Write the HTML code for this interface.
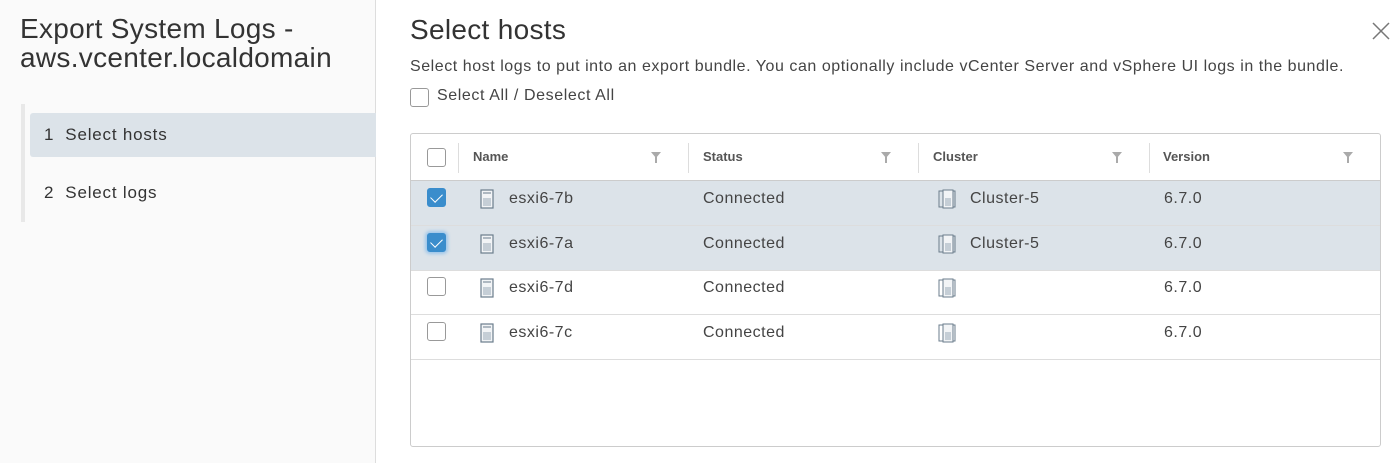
<!DOCTYPE html>
<html><head><style>
*{box-sizing:border-box;margin:0;padding:0}
body{width:1400px;height:463px;overflow:hidden;background:#fff;font-family:"Liberation Sans",sans-serif;color:#333;position:relative}
.side{position:absolute;left:0;top:0;width:376px;height:463px;background:#fafafa;border-right:1px solid #ddd}
.side h1{position:absolute;left:20px;top:14px;font-weight:normal;font-size:28px;line-height:29px;color:#333;letter-spacing:0.3px}
.bar{position:absolute;left:21px;top:104px;width:4px;height:118px;background:#e8e8e8}
.step{position:absolute;left:30px;width:346px;height:44px;font-size:17px;line-height:44px;padding-left:14px;color:#333;letter-spacing:0.8px}
.step.a{background:#dce3e9;border-radius:3px 0 0 3px}
.t{position:absolute;left:410px;top:14px;font-size:28px;color:#333;letter-spacing:0.3px}
.d{position:absolute;left:410px;top:58px;font-size:16px;color:#444;letter-spacing:0.55px}
.cb{position:absolute;width:19px;height:19px;border:1px solid #999;border-radius:3px;background:#fff}
.cb.on{background:#3a8dcc;border-color:#3a8dcc}
.cb.on:after{content:"";position:absolute;left:5px;top:2px;width:6px;height:10px;border:solid #fff;border-width:0 1.5px 1.5px 0;transform:rotate(45deg)}
.sa{position:absolute;left:437px;top:87px;font-size:16px;color:#444;letter-spacing:0.6px}
.grid{position:absolute;left:410px;top:133px;width:971px;height:314px;border:1px solid #ccc;border-radius:3px;overflow:hidden}
.hd{position:absolute;left:0;top:0;width:100%;height:47px;border-bottom:1px solid #ccc;box-shadow:0 1px 2px rgba(0,0,0,.1)}
.hc{position:absolute;top:15px;font-size:13px;font-weight:bold;color:#555}
.sep{position:absolute;top:9px;width:1px;height:30px;background:#ddd}
.fl{position:absolute;top:18px;width:0;height:0;border-left:5px solid transparent;border-right:5px solid transparent;border-top:6px solid #aaa}
.fl:after{content:"";position:absolute;left:-1px;top:-1px;width:2px;height:6px;background:#aaa}
.row{position:absolute;left:0;width:100%;height:45px;border-bottom:1px solid #ddd;font-size:16px;letter-spacing:0.5px}
.row.s{background:#dce3e9}
.row span{position:absolute;top:9px;color:#444}
.row .cb{left:16px;top:7px}
.hi{position:absolute;left:69px;top:8px}
.ci{position:absolute;left:527px;top:8px}
</style></head><body>
<div class="side">
<h1>Export System Logs -<br>aws.vcenter.localdomain</h1>
<div class="bar"></div>
<div class="step a" style="top:113px">1&nbsp;&nbsp;Select hosts</div>
<div class="step" style="top:171px">2&nbsp;&nbsp;Select logs</div>
</div>
<div class="t">Select hosts</div>
<svg style="position:absolute;left:1372px;top:22px" width="18" height="18"><path d="M1 1L17 17M17 1L1 17" stroke="#777" stroke-width="1.5"/></svg>
<div class="d">Select host logs to put into an export bundle. You can optionally include vCenter Server and vSphere UI logs in the bundle.</div>
<div class="cb" style="left:410px;top:88px"></div>
<div class="sa">Select All / Deselect All</div>
<div class="grid">
<div class="hd">
<div class="cb" style="left:16px;top:14px"></div>
<div class="sep" style="left:47px"></div>
<div class="hc" style="left:62px">Name</div><div class="fl" style="left:240px"></div>
<div class="sep" style="left:277px"></div>
<div class="hc" style="left:292px">Status</div><div class="fl" style="left:470px"></div>
<div class="sep" style="left:507px"></div>
<div class="hc" style="left:522px">Cluster</div><div class="fl" style="left:701px"></div>
<div class="sep" style="left:738px"></div>
<div class="hc" style="left:752px">Version</div><div class="fl" style="left:932px"></div>
</div>
<div class="row s" style="top:47px"><div class="cb on"></div>
<svg class="hi" width="14" height="20"><rect x="1" y="1" width="12" height="18" fill="#f2f4f6" stroke="#6b7d8c" stroke-width="1.2"/><rect x="3" y="9" width="8" height="8" fill="#c5ced6"/><line x1="3" y1="4" x2="11" y2="4" stroke="#6b7d8c"/></svg>
<span style="left:98px">esxi6-7b</span><span style="left:292px">Connected</span>
<svg class="ci" width="20" height="20"><rect x="1" y="2" width="16" height="16" fill="none" stroke="#6b7d8c"/><rect x="5" y="1" width="10" height="18" fill="#f2f4f6" stroke="#6b7d8c"/><rect x="7" y="9" width="6" height="8" fill="#c5ced6"/></svg>
<span style="left:559px">Cluster-5</span><span style="left:753px">6.7.0</span></div>
<div class="row s" style="top:92px"><div class="cb on" style="box-shadow:0 0 3px 2px #9cc6ea"></div>
<svg class="hi" width="14" height="20"><rect x="1" y="1" width="12" height="18" fill="#f2f4f6" stroke="#6b7d8c" stroke-width="1.2"/><rect x="3" y="9" width="8" height="8" fill="#c5ced6"/><line x1="3" y1="4" x2="11" y2="4" stroke="#6b7d8c"/></svg>
<span style="left:98px">esxi6-7a</span><span style="left:292px">Connected</span>
<svg class="ci" width="20" height="20"><rect x="1" y="2" width="16" height="16" fill="none" stroke="#6b7d8c"/><rect x="5" y="1" width="10" height="18" fill="#f2f4f6" stroke="#6b7d8c"/><rect x="7" y="9" width="6" height="8" fill="#c5ced6"/></svg>
<span style="left:559px">Cluster-5</span><span style="left:753px">6.7.0</span></div>
<div class="row" style="top:136px"><div class="cb"></div>
<svg class="hi" width="14" height="20"><rect x="1" y="1" width="12" height="18" fill="#f2f4f6" stroke="#6b7d8c" stroke-width="1.2"/><rect x="3" y="9" width="8" height="8" fill="#c5ced6"/><line x1="3" y1="4" x2="11" y2="4" stroke="#6b7d8c"/></svg>
<span style="left:98px">esxi6-7d</span><span style="left:292px">Connected</span>
<svg class="ci" width="20" height="20"><rect x="1" y="2" width="16" height="16" fill="none" stroke="#6b7d8c"/><rect x="5" y="1" width="10" height="18" fill="#f2f4f6" stroke="#6b7d8c"/><rect x="7" y="9" width="6" height="8" fill="#c5ced6"/></svg>
<span style="left:753px">6.7.0</span></div>
<div class="row" style="top:181px"><div class="cb"></div>
<svg class="hi" width="14" height="20"><rect x="1" y="1" width="12" height="18" fill="#f2f4f6" stroke="#6b7d8c" stroke-width="1.2"/><rect x="3" y="9" width="8" height="8" fill="#c5ced6"/><line x1="3" y1="4" x2="11" y2="4" stroke="#6b7d8c"/></svg>
<span style="left:98px">esxi6-7c</span><span style="left:292px">Connected</span>
<svg class="ci" width="20" height="20"><rect x="1" y="2" width="16" height="16" fill="none" stroke="#6b7d8c"/><rect x="5" y="1" width="10" height="18" fill="#f2f4f6" stroke="#6b7d8c"/><rect x="7" y="9" width="6" height="8" fill="#c5ced6"/></svg>
<span style="left:753px">6.7.0</span></div>
</div>
</body></html>
